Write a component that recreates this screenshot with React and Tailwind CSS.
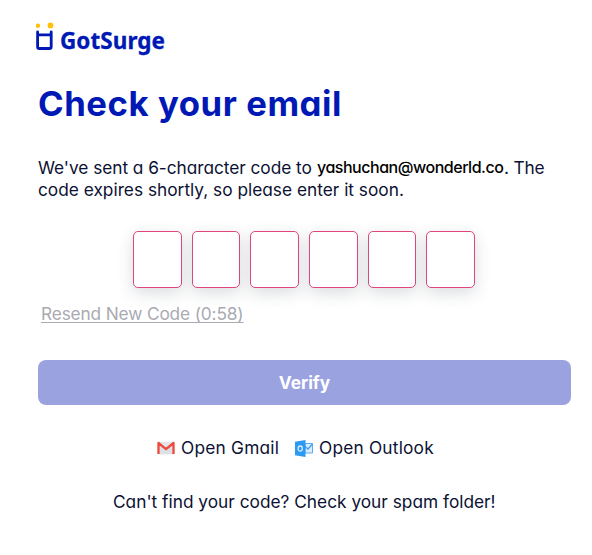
import React from "react";

function Logo() {
  return (
    <div className="flex h-[38px] items-start">
      <svg width="18" height="29" viewBox="0 0 18 29" className="mt-px shrink-0">
        <circle cx="1.9" cy="3.8" r="2.2" fill="#ffc107" />
        <circle cx="14.5" cy="3.4" r="2.9" fill="#ffc107" />
        <path d="M1.600 10V24.700Q1.600 26.500 3.400 26.500H13.400Q15.200 26.500 15.200 24.700V10M1.600 12.900H15.200" fill="none" stroke="#0019b4" strokeWidth="2.800" strokeLinecap="round" />
      </svg>
      <span className="ml-[6px] mt-[5px] whitespace-nowrap font-['Noto_Sans',sans-serif] text-[22.500px] font-bold leading-[30px] tracking-[0.05px] [-webkit-text-stroke:0.300px_#0019b4]">GotSurge</span>
    </div>
  );
}

function GmailIcon() {
  return (
    <svg width="18" height="14" viewBox="0 0 18 14" className="shrink-0">
      <rect x="0.5" y="0.7" width="17" height="12.6" rx="1" fill="#e3e6e9" />
      <path d="M3 4.5 9 9l6-4.5v8.8H3z" fill="#dde1e5" />
      <path d="M1.5 13V2L9 8.1 16.500 2V13" fill="none" stroke="#ef4a3e" strokeWidth="2.3" strokeLinejoin="round" />
    </svg>
  );
}

function OutlookIcon() {
  return (
    <svg width="18" height="17" viewBox="0 0 18 17" className="shrink-0">
      <path d="M10 3.500h7.500v9.500H10z" fill="#d9edff" stroke="#5badf3" strokeWidth="1" />
      <path d="m10 6.500 3 2.500 4.500-5" fill="none" stroke="#3f9ff0" strokeWidth="1.300" />
      <path d="M0 1.700 10.500 0v17L0 15.200z" fill="#2b9af3" />
      <ellipse cx="5.200" cy="8.600" rx="2.100" ry="2.600" fill="none" stroke="#d5ebff" strokeWidth="1.300" />
    </svg>
  );
}

export default function App() {
  return (
    <main className="flex h-[555px] w-[592px] flex-col overflow-hidden bg-white pl-[36px] pr-[21px] pt-[21px] font-['Inter',sans-serif] text-[17.300px] leading-[22px] text-[#0b1133] [font-feature-settings:'cv11']">
      <header className="text-[#0019b4]">
        <Logo />
        <h1 className="ml-[2px] mt-[22px] whitespace-nowrap text-[34.700px] font-bold leading-[44px] tracking-[0.550px]">Check your email</h1>
      </header>
      <div className="ml-[2px] mt-[32px] whitespace-nowrap">
        <p className="flex">
          <span className="w-[279px] tracking-[-0.050px]">We've sent a 6-character code to</span>
          <span className="-mt-px w-[187px] text-[16px] font-medium tracking-[-0.480px] text-black">yashuchan@wonderld.co</span>
          <span className="tracking-[-0.200px]">. The</span>
        </p>
        <p>code expires shortly, so please enter it soon.</p>
      </div>
      <div className="ml-[97px] mt-[30px] flex gap-[10px]">
        {[0, 1, 2, 3, 4, 5].map((i) => (
          <input
            key={i}
            maxLength={1}
            aria-label={`Character ${i + 1}`}
            className="h-[57px] w-[48.700px] rounded-[5px] border border-[#e0457f] bg-white text-center shadow-[0_5px_16px_rgba(30,50,60,0.17)] outline-none"
          />
        ))}
      </div>
      <a className="ml-[5px] mt-[15px] self-start whitespace-nowrap tracking-[-0.150px] text-[#a9aab2] underline decoration-1 underline-offset-[2px]">Resend New Code (0:58)</a>
      <button className="ml-[2px] mt-[35px] h-[45px] w-[533px] rounded-[8px] bg-[#9aa3e0] font-bold text-white">Verify</button>
      <div className="ml-[121px] mt-[32px] flex items-center whitespace-nowrap">
        <GmailIcon />
        <span className="ml-[6px] w-[114px] tracking-[0.220px]">Open Gmail</span>
        <OutlookIcon />
        <span className="ml-[6px] tracking-[0.200px]">Open Outlook</span>
      </div>
      <p className="ml-[77px] mt-[32px] whitespace-nowrap">Can't find your code? Check your spam folder!</p>
    </main>
  );
}
